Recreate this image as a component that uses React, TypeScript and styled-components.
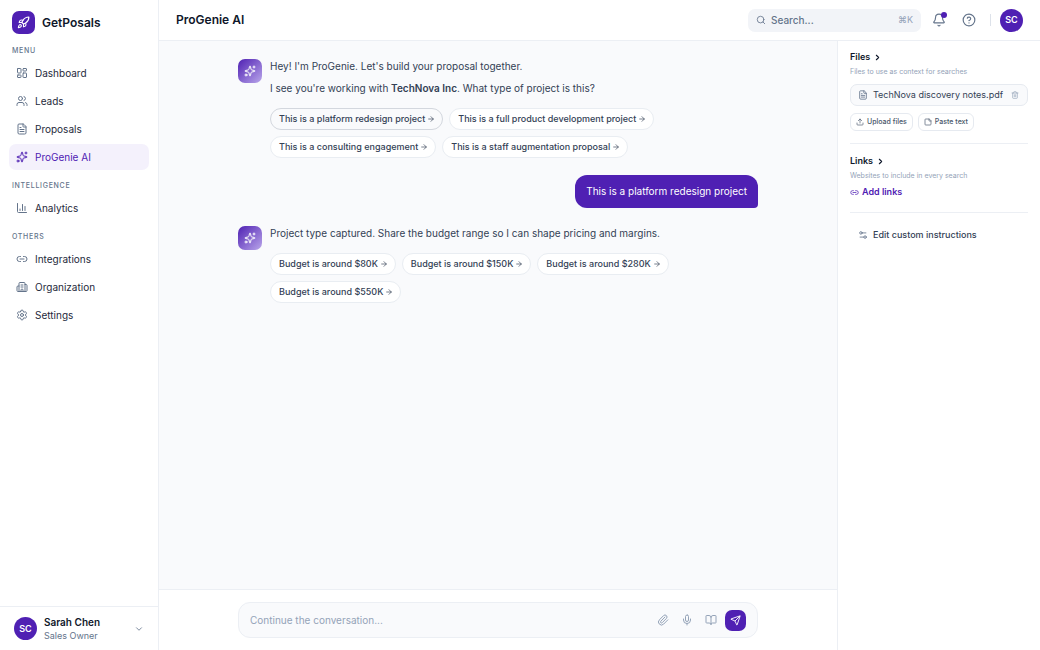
import React from "react";
import styled, { createGlobalStyle, css } from "styled-components";
import {
  ArrowRight, Bell, BookOpen, Building2, ChartColumn, ChevronDown, ChevronRight, CircleHelp,
  FileText, LayoutDashboard, Link2, Mic, Paperclip, Rocket, Search, Send, Settings,
  Settings2, Sparkles, StickyNote, Trash2, Upload, Users,
} from "lucide-react";

const color = {
  brand: "#4f20b3",
  brandSoft: "#f4f1fc",
  ink: "#0f172a",
  text: "#334155",
  muted: "#64748b",
  faint: "#94a3b8",
  line: "#eceff4",
  canvas: "#f9fafc",
};

const GlobalStyle = createGlobalStyle`
  *, *::before, *::after { box-sizing: border-box; }
  body {
    margin: 0;
    background: #fff;
    color: ${color.ink};
    font-family: Inter, "Liberation Sans", sans-serif;
    font-size: 10px;
    line-height: 16px;
  }
  button, input { font: inherit; color: inherit; }
  button { border: 0; background: none; padding: 0; cursor: pointer; }
  a { color: inherit; text-decoration: none; }
  h1, h2, p { margin: 0; }
  svg { flex: none; display: block; }
`;

const Shell = styled.div`
  display: grid;
  grid-template-columns: 159px minmax(0, 1fr);
  min-height: 100vh;
`;

const Sidebar = styled.aside`
  display: flex;
  flex-direction: column;
  border-right: 1px solid ${color.line};
`;

const Brand = styled.a`
  display: flex;
  align-items: center;
  gap: 7px;
  padding: 11px 12px 9px;
  font-size: 12px;
  font-weight: 600;
`;

const LogoTile = styled.span`
  display: grid;
  place-items: center;
  width: 23px;
  height: 23px;
  border-radius: 7px;
  background: ${color.brand};
  color: #fff;
`;

const Nav = styled.nav`
  flex: 1;
  display: flex;
  flex-direction: column;
  gap: 8px;
`;

const NavHeading = styled.h2`
  padding: 0 12px;
  margin-bottom: 1px;
  font-size: 7px;
  line-height: 16px;
  font-weight: 500;
  letter-spacing: 0.1em;
  text-transform: uppercase;
  color: ${color.muted};
`;

const NavList = styled.ul`
  display: flex;
  flex-direction: column;
  gap: 2px;
  margin: 0;
  padding: 0 9px;
  list-style: none;
`;

const NavLink = styled.a<{ $active?: boolean }>`
  display: flex;
  align-items: center;
  gap: 7px;
  height: 26px;
  padding: 0 7px;
  border-radius: 7px;
  color: #1e293b;
  svg { color: ${color.muted}; }
  ${(p) => p.$active && css`
    background: ${color.brandSoft};
    color: ${color.brand};
    svg { color: ${color.brand}; }
  `}
`;

const Account = styled.button`
  display: flex;
  align-items: center;
  gap: 7px;
  height: 44px;
  padding: 0 14px;
  border-top: 1px solid ${color.line};
  text-align: left;
  > svg { margin-left: auto; color: ${color.muted}; }
`;

const AccountText = styled.span`
  display: flex;
  flex-direction: column;
  line-height: 13px;
`;

const AccountName = styled.span`
  font-weight: 600;
`;

const AccountRole = styled.span`
  font-size: 9px;
  color: ${color.muted};
`;

const Initials = styled.span`
  display: grid;
  place-items: center;
  width: 23px;
  height: 23px;
  border-radius: 50%;
  background: ${color.brand};
  color: #fff;
  font-size: 9px;
  font-weight: 600;
`;

const Page = styled.div`
  display: flex;
  flex-direction: column;
`;

const TopBar = styled.header`
  display: flex;
  align-items: center;
  justify-content: space-between;
  height: 41px;
  padding: 0 17px;
  border-bottom: 1px solid ${color.line};
`;

const PageTitle = styled.h1`
  font-size: 12px;
  font-weight: 600;
`;

const TopActions = styled.div`
  display: flex;
  align-items: center;
`;

const SearchBox = styled.label`
  display: flex;
  align-items: center;
  gap: 5px;
  width: 173px;
  height: 23px;
  padding: 0 8px;
  margin-right: 11px;
  border-radius: 7px;
  background: #f2f4f8;
  color: ${color.muted};
`;

const SearchInput = styled.input`
  flex: 1;
  min-width: 0;
  padding: 0;
  border: 0;
  outline: 0;
  background: none;
  font-weight: 500;
  &::placeholder { color: ${color.muted}; opacity: 1; }
`;

const Shortcut = styled.kbd`
  font-family: inherit;
  font-size: 9px;
  color: ${color.faint};
`;

const BarButton = styled.button`
  position: relative;
  display: grid;
  place-items: center;
  width: 14px;
  height: 24px;
  margin-right: 16px;
  color: ${color.muted};
`;

const UnreadDot = styled.span`
  position: absolute;
  top: 4px;
  right: -1px;
  width: 6px;
  height: 6px;
  border-radius: 50%;
  background: ${color.brand};
`;

const BarDivider = styled.span`
  width: 1px;
  height: 12px;
  margin: 0 9px 0 -2px;
  background: #dde2ea;
`;

const Workspace = styled.div`
  flex: 1;
  display: grid;
  grid-template-columns: minmax(0, 1fr) 203px;
`;

const Chat = styled.main`
  display: flex;
  flex-direction: column;
  background: ${color.canvas};
`;

const Thread = styled.div`
  flex: 1;
  display: flex;
  flex-direction: column;
  gap: 17px;
  width: 100%;
  max-width: 520px;
  margin: 0 auto;
  padding-top: 17px;
`;

const BotTurn = styled.article`
  display: flex;
  gap: 8px;
`;

const BotTile = styled.span`
  display: grid;
  place-items: center;
  flex: none;
  width: 24px;
  height: 24px;
  margin-top: 1px;
  border-radius: 7px;
  background: linear-gradient(135deg, ${color.brand}, #b9a6ea);
  color: #fff;
`;

const BotBody = styled.div`
  flex: 1;
  color: ${color.text};
  p { margin-bottom: 6px; }
  strong { font-weight: 600; }
`;

const Replies = styled.div`
  display: flex;
  flex-wrap: wrap;
  gap: 6px;
  max-width: 400px;
  padding-top: 6px;
`;

const Reply = styled.button<{ $chosen?: boolean }>`
  display: flex;
  align-items: center;
  gap: 2px;
  height: 22px;
  padding: 0 7px 0 8px;
  border: 1px solid ${(p) => (p.$chosen ? "#d3d7de" : "#e9edf2")};
  border-radius: 11px;
  background: ${(p) => (p.$chosen ? color.canvas : "#fff")};
  font-size: 9px;
  font-weight: 500;
  color: ${color.text};
`;

const UserBubble = styled.p`
  align-self: flex-end;
  padding: 8px 11px 9px;
  border-radius: 12px 12px 4px 12px;
  background: ${color.brand};
  color: #fff;
`;

const ComposerBar = styled.div`
  padding: 12px 0;
  border-top: 1px solid ${color.line};
  background: #fff;
`;

const Composer = styled.form`
  display: flex;
  align-items: center;
  gap: 12px;
  width: 100%;
  max-width: 520px;
  height: 36px;
  margin: 0 auto;
  padding: 0 11px;
  border: 1px solid ${color.line};
  border-radius: 12px;
  background: ${color.canvas};
`;

const ComposerInput = styled.input`
  flex: 1;
  min-width: 0;
  padding: 0;
  border: 0;
  outline: 0;
  background: none;
  &::placeholder { color: ${color.faint}; opacity: 1; }
`;

const ToolButton = styled.button`
  display: grid;
  place-items: center;
  width: 12px;
  height: 12px;
  color: ${color.faint};
`;

const SendButton = styled.button`
  display: grid;
  place-items: center;
  width: 21px;
  height: 21px;
  margin-left: -4px;
  border-radius: 7px;
  background: ${color.brand};
  color: #fff;
`;

const ContextPanel = styled.aside`
  padding: 8px 12px;
  border-left: 1px solid ${color.line};
`;

const PanelSection = styled.section`
  padding-bottom: 12px;
  margin-bottom: 9px;
  border-bottom: 1px solid ${color.line};
`;

const PanelToggle = styled.button`
  display: flex;
  align-items: center;
  gap: 3px;
  font-size: 9px;
  font-weight: 600;
  line-height: 16px;
`;

const PanelHint = styled.p`
  font-size: 7px;
  line-height: 13px;
  color: ${color.faint};
`;

const FileRow = styled.div`
  display: flex;
  align-items: center;
  gap: 5px;
  height: 22px;
  margin: 6px 0 7px;
  padding: 0 8px 0 7px;
  border: 1px solid #e6eaf0;
  border-radius: 7px;
  background: ${color.canvas};
  font-size: 9px;
  color: ${color.text};
  > svg { color: ${color.muted}; }
`;

const RemoveFile = styled.button`
  margin-left: auto;
  color: ${color.faint};
`;

const FileActions = styled.div`
  display: flex;
  gap: 5px;
`;

const SmallButton = styled.button`
  display: flex;
  align-items: center;
  gap: 3px;
  height: 18px;
  padding: 0 5px;
  border: 1px solid #e6eaf0;
  border-radius: 6px;
  font-size: 7px;
  font-weight: 500;
  color: #475569;
`;

const AddLinks = styled.button`
  display: flex;
  align-items: center;
  gap: 3px;
  margin-top: 2px;
  font-size: 9px;
  font-weight: 600;
  line-height: 16px;
  color: ${color.brand};
`;

const EditInstructions = styled.button`
  display: flex;
  align-items: center;
  gap: 5px;
  height: 26px;
  padding: 0 8px;
  font-size: 9px;
  font-weight: 500;
  color: ${color.text};
  svg { color: ${color.muted}; }
`;

type NavItem = {
  label: string;
  icon: React.ComponentType<{ size?: number; strokeWidth?: number }>;
  active?: boolean;
};

const navGroups: { title: string; items: NavItem[] }[] = [
  {
    title: "Menu",
    items: [
      { label: "Dashboard", icon: LayoutDashboard },
      { label: "Leads", icon: Users },
      { label: "Proposals", icon: FileText },
      { label: "ProGenie AI", icon: Sparkles, active: true },
    ],
  },
  { title: "Intelligence", items: [{ label: "Analytics", icon: ChartColumn }] },
  {
    title: "Others",
    items: [
      { label: "Integrations", icon: Link2 },
      { label: "Organization", icon: Building2 },
      { label: "Settings", icon: Settings },
    ],
  },
];

const projectTypes = [
  "This is a platform redesign project",
  "This is a full product development project",
  "This is a consulting engagement",
  "This is a staff augmentation proposal",
];

const budgets = ["$80K", "$150K", "$280K", "$550K"].map((b) => `Budget is around ${b}`);

function ReplyList({ options, chosen }: { options: string[]; chosen?: string }) {
  return (
    <Replies>
      {options.map((option) => (
        <Reply key={option} type="button" $chosen={option === chosen}>
          {option}
          <ArrowRight size={8} />
        </Reply>
      ))}
    </Replies>
  );
}

function BotMessage({ children }: { children: React.ReactNode }) {
  return (
    <BotTurn>
      <BotTile><Sparkles size={12} /></BotTile>
      <BotBody>{children}</BotBody>
    </BotTurn>
  );
}

export default function App() {
  return (
    <>
      <GlobalStyle />
      <Shell>
        <Sidebar>
          <Brand href="#">
            <LogoTile><Rocket size={13} strokeWidth={2} /></LogoTile>
            GetPosals
          </Brand>
          <Nav aria-label="Main">
            {navGroups.map((group) => (
              <div key={group.title}>
                <NavHeading>{group.title}</NavHeading>
                <NavList>
                  {group.items.map(({ label, icon: Icon, active }) => (
                    <li key={label}>
                      <NavLink href="#" $active={active} aria-current={active ? "page" : undefined}>
                        <Icon size={12} strokeWidth={2} />
                        {label}
                      </NavLink>
                    </li>
                  ))}
                </NavList>
              </div>
            ))}
          </Nav>
          <Account type="button">
            <Initials>SC</Initials>
            <AccountText>
              <AccountName>Sarah Chen</AccountName>
              <AccountRole>Sales Owner</AccountRole>
            </AccountText>
            <ChevronDown size={10} />
          </Account>
        </Sidebar>

        <Page>
          <TopBar>
            <PageTitle>ProGenie AI</PageTitle>
            <TopActions>
              <SearchBox>
                <Search size={10} />
                <SearchInput type="search" placeholder="Search..." aria-label="Search" />
                <Shortcut>⌘K</Shortcut>
              </SearchBox>
              <BarButton type="button" aria-label="Notifications">
                <Bell size={14} strokeWidth={2} />
                <UnreadDot />
              </BarButton>
              <BarButton type="button" aria-label="Help">
                <CircleHelp size={14} strokeWidth={2} />
              </BarButton>
              <BarDivider />
              <button type="button" aria-label="Account"><Initials>SC</Initials></button>
            </TopActions>
          </TopBar>

          <Workspace>
            <Chat>
              <Thread>
                <BotMessage>
                  <p>Hey! I'm ProGenie. Let's build your proposal together.</p>
                  <p>I see you're working with <strong>TechNova Inc</strong>. What type of project is this?</p>
                  <ReplyList options={projectTypes} chosen={projectTypes[0]} />
                </BotMessage>
                <UserBubble>{projectTypes[0]}</UserBubble>
                <BotMessage>
                  <p>Project type captured. Share the budget range so I can shape pricing and margins.</p>
                  <ReplyList options={budgets} />
                </BotMessage>
              </Thread>
              <ComposerBar>
                <Composer>
                  <ComposerInput placeholder="Continue the conversation..." aria-label="Message" />
                  <ToolButton type="button" aria-label="Attach file"><Paperclip size={12} /></ToolButton>
                  <ToolButton type="button" aria-label="Dictate"><Mic size={12} /></ToolButton>
                  <ToolButton type="button" aria-label="Prompt library"><BookOpen size={12} /></ToolButton>
                  <SendButton type="submit" aria-label="Send"><Send size={11} /></SendButton>
                </Composer>
              </ComposerBar>
            </Chat>

            <ContextPanel aria-label="Context">
              <PanelSection>
                <PanelToggle type="button">Files <ChevronRight size={9} strokeWidth={3} /></PanelToggle>
                <PanelHint>Files to use as context for searches</PanelHint>
                <FileRow>
                  <FileText size={10} />
                  TechNova discovery notes.pdf
                  <RemoveFile type="button" aria-label="Remove file"><Trash2 size={8} /></RemoveFile>
                </FileRow>
                <FileActions>
                  <SmallButton type="button"><Upload size={8} />Upload files</SmallButton>
                  <SmallButton type="button"><StickyNote size={8} />Paste text</SmallButton>
                </FileActions>
              </PanelSection>
              <PanelSection>
                <PanelToggle type="button">Links <ChevronRight size={9} strokeWidth={3} /></PanelToggle>
                <PanelHint>Websites to include in every search</PanelHint>
                <AddLinks type="button"><Link2 size={9} />Add links</AddLinks>
              </PanelSection>
              <EditInstructions type="button"><Settings2 size={10} />Edit custom instructions</EditInstructions>
            </ContextPanel>
          </Workspace>
        </Page>
      </Shell>
    </>
  );
}
